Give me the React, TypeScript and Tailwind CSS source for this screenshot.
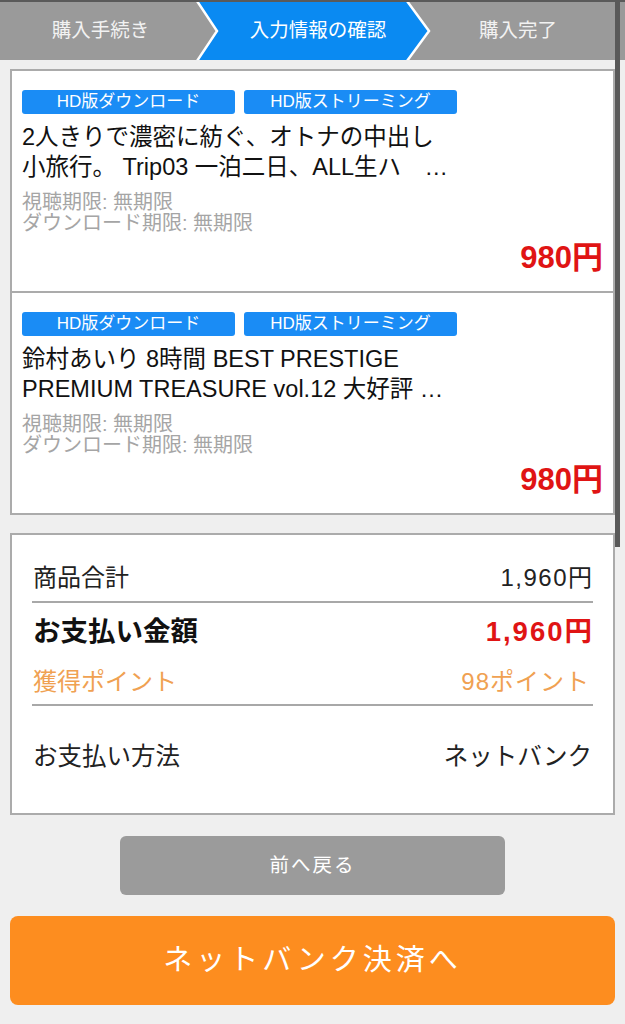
import React from "react";

const FONT = "'Liberation Sans','Noto Sans CJK JP',sans-serif";

function Badges() {
  return (
    <div className="flex gap-[9px]">
      <div className="w-[213px] h-[24px] rounded-[3px] bg-[#1a8cf5] text-white text-[17px] leading-[24px] text-center">
        HD版ダウンロード
      </div>
      <div className="w-[213px] h-[24px] rounded-[3px] bg-[#1a8cf5] text-white text-[17px] leading-[24px] text-center">
        HD版ストリーミング
      </div>
    </div>
  );
}

function Item({ line1, line2, border }: { line1: string; line2: string; border?: boolean }) {
  return (
    <div className={"px-[10px] pt-[19px] pb-[15px] " + (border ? "border-t-2 border-[#ababab]" : "")}>
      <Badges />
      <div className="mt-[8px] text-[23.5px] leading-[30px] text-[#111]">
        <div className="whitespace-nowrap">{line1}</div>
        <div className="whitespace-nowrap">{line2}</div>
      </div>
      <div className="mt-[10px] text-[20px] leading-[21px] text-[#a5a5a5]">
        <div>視聴期限: 無期限</div>
        <div>ダウンロード期限: 無期限</div>
      </div>
      <div className="mt-[6px] text-right text-[31px] leading-[36px] font-bold text-[#e01414]">980円</div>
    </div>
  );
}

export default function App() {
  return (
    <div className="relative w-full min-h-screen bg-[#efefef]" style={{ fontFamily: FONT }}>
      {/* Step bar */}
      <div className="flex h-[60px] bg-[#9a9a9a] border-t-2 border-[#5a5a5a] text-[19.5px]">
        <div className="w-[195px] flex items-center justify-center text-[#f2f2f2] pl-[6px]">購入手続き</div>
        <div className="relative w-[236px] flex items-center justify-center text-white">
          <svg className="absolute inset-0" width="236" height="58" viewBox="0 0 236 58">
            <polygon points="2,0 212,0 234,29 212,58 2,58 22,29" fill="#0a8af2" />
            <polyline points="2,-1 22,29 2,59" fill="none" stroke="#ffffff" strokeWidth="2.5" />
            <polyline points="212,-1 234,29 212,59" fill="none" stroke="#ffffff" strokeWidth="2.5" />
          </svg>
          <span className="relative pl-[10px]">入力情報の確認</span>
        </div>
        <div className="flex-1 flex items-center justify-center text-[#f2f2f2] pr-[20px]">購入完了</div>
      </div>

      {/* Items */}
      <div className="mx-[10px] mt-[9px] bg-white border-2 border-[#ababab]">
        <Item line1="2人きりで濃密に紡ぐ、オトナの中出し" line2="小旅行。 Trip03 一泊二日、ALL生ハ　…" />
        <Item border line1="鈴村あいり 8時間 BEST PRESTIGE" line2="PREMIUM TREASURE vol.12 大好評 …" />
      </div>

      {/* Summary */}
      <div className="mx-[10px] mt-[18px] bg-white border-2 border-[#ababab] px-[20px] pt-[27px] pb-[40px] text-[#222]">
        <div className="flex justify-between text-[24px] leading-[32px] px-[1px] pb-[7px] border-b-2 border-[#a8a8a8]">
          <span>商品合計</span>
          <span className="tracking-[1.5px] mr-[-1.5px]">1,960円</span>
        </div>
        <div className="flex justify-between mt-[12px] text-[27.5px] leading-[34px] font-bold px-[1px]">
          <span className="text-[#111]">お支払い金額</span>
          <span className="text-[#e01414] tracking-[2px] mr-[-2px]">1,960円</span>
        </div>
        <div className="flex justify-between mt-[17px] text-[24px] leading-[32px] text-[#f0a152] px-[1px] pb-[6px] border-b-2 border-[#a8a8a8]">
          <span>獲得ポイント</span>
          <span className="pr-[2px] tracking-[1px]">98ポイント</span>
        </div>
        <div className="flex justify-between mt-[35px] text-[24.5px] leading-[32px] px-[1px]">
          <span>お支払い方法</span>
          <span>ネットバンク</span>
        </div>
      </div>

      {/* Buttons */}
      <div className="flex justify-center mt-[21px]">
        <div className="w-[385px] h-[59px] rounded-[6px] bg-[#9b9b9b] text-white text-[19.5px] tracking-[2px] flex items-center justify-center">
          前へ戻る
        </div>
      </div>
      <div className="mx-[10px] mt-[21px] h-[89px] rounded-[8px] bg-[#fd8d1f] text-white text-[29px] tracking-[4px] flex items-center justify-center">
        ネットバンク決済へ
      </div>
      <div className="h-[19px]" />

      {/* Scrollbar overlay */}
      <div className="absolute left-[615px] top-0 w-[5px] h-[547px] bg-[#595959]" />
    </div>
  );
}
